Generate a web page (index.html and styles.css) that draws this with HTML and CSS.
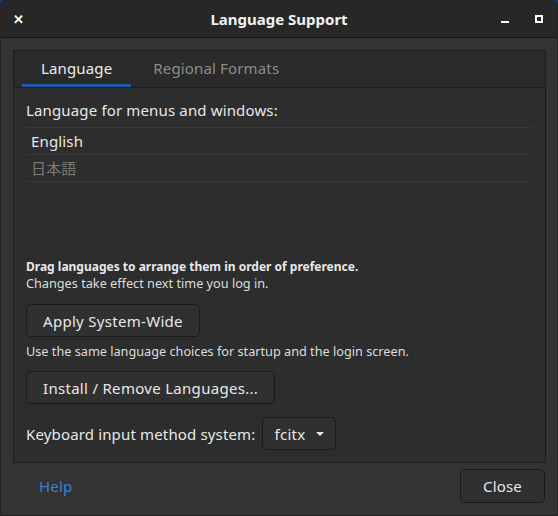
FILE: index.html
```html
<!DOCTYPE html>
<html lang="en">
<head>
    <meta charset="UTF-8">
    <title>Language Support</title>
    <link rel="stylesheet" href="styles.css">
</head>
<body>
    <div class="window">
        <div class="titlebar">
            <span class="tb-close">&#x2715;</span>
            <span class="tb-title">Language Support</span>
            <span class="tb-min"></span>
            <span class="tb-max"></span>
        </div>

        <div class="main">
            <div class="notebook">
                <div class="tabs">
                    <div class="tab active">Language</div>
                    <div class="tab">Regional Formats</div>
                </div>

                <div class="page">
                    <div class="label">Language for menus and windows:</div>
                    <div class="lang-list">
                        <div class="lang-row">English</div>
                        <div class="lang-row muted">日本語</div>
                    </div>

                    <div class="hint-bold">Drag languages to arrange them in order of preference.</div>
                    <div class="hint">Changes take effect next time you log in.</div>

                    <div class="btn-row apply-row"><button class="btn">Apply System-Wide</button></div>
                    <div class="hint spaced">Use the same language choices for startup and the login screen.</div>

                    <div class="btn-row install-row"><button class="btn">Install / Remove Languages...</button></div>

                    <div class="im-row">
                        <span>Keyboard input method system:</span>
                        <button class="btn combo">fcitx <span class="arrow"></span></button>
                    </div>
                </div>
            </div>

            <div class="actions">
                <a class="help">Help</a>
                <button class="btn close-btn">Close</button>
            </div>
        </div>
    </div>
</body>
</html>
```

FILE: styles.css
```css
body {
    margin: 0;
    background: #1b3a66;
    font-family: "Noto Sans", "Noto Sans CJK JP", sans-serif;
    font-size: 15px;
    letter-spacing: 0.15px;
    color: #e8e8e8;
}

.window {
    width: 558px;
    height: 516px;
    background: #333333;
    border-radius: 6px 6px 0 0;
    box-sizing: border-box;
    border: 1px solid #242424;
    display: flex;
    flex-direction: column;
    overflow: hidden;
}

.titlebar {
    height: 36px;
    background: #272727;
    border-bottom: 1px solid #151515;
    display: flex;
    align-items: center;
    position: relative;
    flex-shrink: 0;
}

.tb-close {
    position: absolute;
    left: 12px;
    top: 9px;
    font-size: 13px;
    font-weight: bold;
    color: #ffffff;
}

.tb-title {
    flex: 1;
    text-align: center;
    font-weight: bold;
    font-size: 15px;
    letter-spacing: 0;
    color: #f2f2f2;
}

.tb-min {
    position: absolute;
    left: 500px;
    top: 20px;
    width: 8px;
    height: 2px;
    background: #ffffff;
}

.tb-max {
    position: absolute;
    left: 534px;
    top: 14px;
    width: 4px;
    height: 4px;
    border: 2px solid #ffffff;
}

.main {
    flex: 1;
    padding: 12px 11px 0 12px;
    display: flex;
    flex-direction: column;
}

.notebook {
    height: 413px;
    border: 1px solid #1e1e1e;
    background: #2d2d2d;
    display: flex;
    flex-direction: column;
    box-sizing: border-box;
}

.tabs {
    height: 36px;
    background: #2a2a2a;
    border-bottom: 1px solid #1e1e1e;
    display: flex;
    padding-left: 8px;
    flex-shrink: 0;
}

.tab {
    padding: 1px 19px 0;
    line-height: 32px;
    color: #8c8c8c;
    border-bottom: 3px solid transparent;
    margin-right: 3px;
}

.tab.active {
    color: #eeeeee;
    border-bottom-color: #1f5aa6;
}

.page {
    flex: 1;
    padding: 12px 13px 12px 12px;
    display: flex;
    flex-direction: column;
}

.label {
    line-height: 20px;
}

.lang-list {
    flex: 1;
    margin-top: 7px;
}

.lang-row {
    border-top: 1px solid #383838;
    height: 26px;
    line-height: 26px;
    padding-left: 5px;
}

.lang-row:last-child {
    border-bottom: 1px solid #383838;
}

.lang-row.muted {
    color: #7a7a7a;
}

.hint-bold {
    font-size: 12px;
    font-weight: bold;
    letter-spacing: 0;
    line-height: 16px;
}

.hint {
    font-size: 12.7px;
    line-height: 16px;
    letter-spacing: 0;
    color: #dddddd;
}

.hint.spaced {
    margin-top: 6px;
}

.btn {
    font-family: inherit;
    font-size: 15px;
    letter-spacing: 0.3px;
    color: #e8e8e8;
    background: #303030;
    border: 1px solid #1a1a1a;
    border-radius: 5px;
    height: 33px;
    padding: 0 16px;
}

.apply-row {
    margin-top: 13px;
}

.install-row {
    margin-top: 12px;
}

.im-row {
    margin-top: 13px;
    display: flex;
    align-items: center;
    gap: 7px;
}

.combo {
    padding: 0 11px 0 11px;
    display: flex;
    align-items: center;
    gap: 10px;
}

.arrow {
    width: 0;
    height: 0;
    border-left: 4.5px solid transparent;
    border-right: 4.5px solid transparent;
    border-top: 4.5px solid #e8e8e8;
}

.actions {
    display: flex;
    justify-content: space-between;
    align-items: center;
    padding: 6px 1px 0 26px;
}

.help {
    color: #3c7fd8;
}

.close-btn {
    width: 85px;
    height: 34px;
    padding: 0;
    letter-spacing: 0.15px;
}
```
